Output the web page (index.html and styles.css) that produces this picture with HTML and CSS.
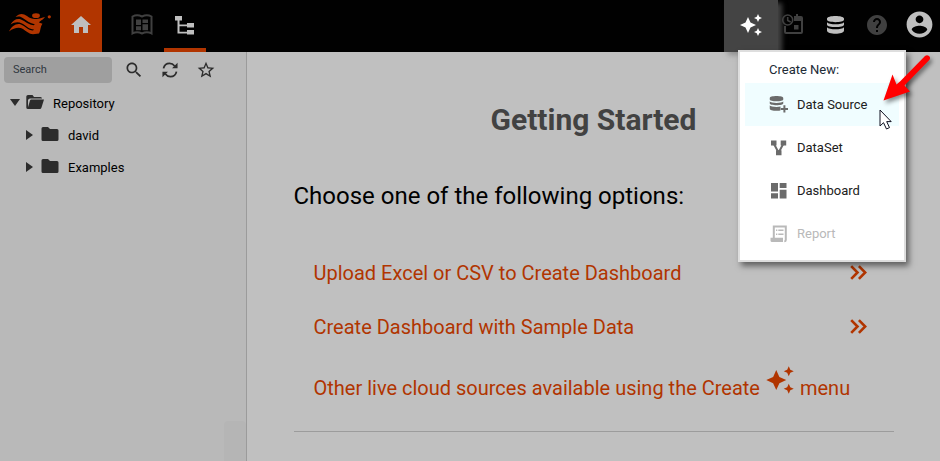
FILE: index.html
```html
<!DOCTYPE html>
<html lang="en">
<head>
<meta charset="utf-8">
<title>Getting Started</title>
<link rel="stylesheet" href="styles.css">
</head>
<body>
<svg class="defs" aria-hidden="true">
  <symbol id="sparkle" viewBox="0 0 24 24"><path d="M19 9l1.250-2.750L23 5l-2.750-1.250L19 1l-1.250 2.750L15 5l2.750 1.250zM11.500 9.500L9 4 6.500 9.500 1 12l5.500 2.500L9 20l2.500-5.500L17 12zM19 15l-1.250 2.750L15 19l2.750 1.250L19 23l1.250-2.750L23 19l-2.750-1.250z"/></symbol>
  <symbol id="folder" viewBox="0 0 18 14"><path d="M2 0h5l2 2h7q1.500 0 1.500 1.500v9q0 1.500-1.500 1.500H2Q.500 14 .500 12.500v-11Q.500 0 2 0z"/></symbol>
  <symbol id="chevrons" viewBox="0 0 17 15"><path d="M1.200 1.200L7.500 7.500l-6.300 6.300M8.900 1.200L15.200 7.500l-6.300 6.300" fill="none" stroke="currentColor" stroke-width="2.600"/></symbol>
  <symbol id="database" viewBox="0 0 17 18"><path d="M0 2.600C0-.8 17-.8 17 2.600v1.200c0 3.200-17 3.200-17 0zM0 6.300c2 2.700 15 2.700 17 0v2.400c0 3.200-17 3.200-17 0zM0 11.200c2 2.700 15 2.700 17 0v3.400c0 4.300-17 4.300-17 0z"/></symbol>
</svg>
<header class="topbar">
  <svg class="logo" viewBox="0 0 42 22"><circle cx="40.300" cy="3.800" r="1.600"/><ellipse cx="27" cy="2.700" rx="3.900" ry="2.400"/><path d="M6.500 4C10 .3 14 0 18 3c4 3 7 3.500 11 2.700 2.500-.3 4-1 7-1.700-2 3-5.500 4-6 5.500l3.500 1.200C31 14 32 17 30 20.500l-6 .8c-4-.3-7-3.300-10-5.300-4-2.300-9-1.200-14 2.500C3 13 7 10 12 11.500c4 1.500 7 6 12 6l1-.9c-5 0-8-4-12-6-4-2-7-1.500-11.500.9C4 7 8 5 12 6.500c4 1.500 8 5.700 13 5.700l.700-1C21 10.500 18 8 14.500 5.500 12 3.300 9 3 6.500 4z"/></svg>
  <a class="nav home"><svg width="24" height="24" viewBox="0 0 24 24"><path d="M10 20v-6h4v6h5v-8h3L12 3 2 12h3v8z"/></svg></a>
  <a class="nav book"><svg width="22" height="22" viewBox="0 0 22 22"><path class="line" d="M1.500 2.500Q6 0 11 2.500q5-2.500 9.500 0v17Q16 17 11 19.500 6 17 1.500 19.500z"/><path d="M5 5.500h5v5.500H5zM11.500 5.500H17v3.500h-5.500zM5 12.300h5v4H5zM11.500 10.300H17v6h-5.500z"/></svg></a>
  <a class="nav tree-tab"><svg width="20" height="19" viewBox="0 0 20 19"><path d="M0 0h7v4.500H4.500V8.500H12V7h7v4.500h-7v-1.300H4.500v5.600H12V14h7v4.500h-7v-1H2.500v-13H0z"/></svg></a>
  <span class="spacer"></span>
  <a class="create"><svg width="24" height="24"><use href="#sparkle"/></svg></a>
  <a class="tool dim"><svg width="21" height="21" viewBox="0 0 21 21"><circle cx="5.700" cy="6" r="5" class="line thin"/><path class="line thin" d="M5.700 3v3.500l3 1.500"/><path d="M12 2h2V0h2v2h3q2 0 2 2v14q0 2-2 2H4q-2 0-2-2v-6h2v6h15V7h-7zM12 11h4.500v4.500H12z"/></svg></a>
  <a class="tool"><svg width="17" height="18"><use href="#database"/></svg></a>
  <a class="tool dim"><svg width="24" height="24" viewBox="0 0 24 24"><path d="M12 2C6.480 2 2 6.480 2 12s4.480 10 10 10 10-4.480 10-10S17.520 2 12 2zm1 17h-2v-2h2v2zm2.070-7.750-.9.920C13.450 12.900 13 13.500 13 15h-2v-.5c0-1.100.450-2.100 1.170-2.830l1.240-1.260c.370-.360.590-.860.590-1.410 0-1.100-.9-2-2-2s-2 .9-2 2H8c0-2.210 1.790-4 4-4s4 1.790 4 4c0 .880-.360 1.680-.930 2.250z"/></svg></a>
  <a class="tool"><svg width="31" height="31" viewBox="0 0 24 24"><path d="M12 2C6.480 2 2 6.480 2 12s4.480 10 10 10 10-4.480 10-10S17.520 2 12 2zm0 3c1.660 0 3 1.340 3 3s-1.340 3-3 3-3-1.340-3-3 1.340-3 3-3zm0 14.200c-2.500 0-4.710-1.280-6-3.220.030-1.990 4-3.080 6-3.080 1.990 0 5.970 1.090 6 3.080-1.290 1.940-3.500 3.220-6 3.220z"/></svg></a>
</header>
<div class="body">
  <aside class="sidebar">
    <div class="searchbar">
      <div class="search">Search</div>
      <svg width="20" height="20" viewBox="0 0 24 24"><path d="M15.500 14h-.790l-.280-.270C15.410 12.590 16 11.110 16 9.500 16 5.910 13.090 3 9.500 3S3 5.910 3 9.500 5.910 16 9.500 16c1.610 0 3.090-.590 4.230-1.570l.270.280v.790l5 4.990L20.490 19l-4.990-5zm-6 0C7.010 14 5 11.990 5 9.500S7.010 5 9.500 5 14 7.010 14 9.500 11.990 14 9.500 14z"/></svg>
      <svg width="16" height="16" viewBox="0 0 18 18"><path class="line" d="M1.700 7.200C2.500 3.500 5.300 1.500 8.500 1.500c2.400 0 4.200 1 5.700 3M16.300 10.800c-.8 3.700-3.600 5.700-6.800 5.700-2.400 0-4.200-1-5.700-3"/><path d="M17.500 .800v6.200h-6.200zM.500 17.200V11h6.200z"/></svg>
      <svg width="20" height="20" viewBox="0 0 24 24"><path d="M22 9.240l-7.190-.620L12 2 9.190 8.630 2 9.240l5.460 4.730L5.820 21 12 17.270 18.180 21l-1.630-7.030L22 9.240zM12 15.400l-3.760 2.270 1-4.280-3.320-2.880 4.380-.380L12 6.100l1.710 4.040 4.380.380-3.320 2.880 1 4.280L12 15.400z"/></svg>
    </div>
    <div class="row root"><i class="caret open"></i><svg width="18" height="14" viewBox="0 0 18 14"><path d="M2 0h4.500L8 2h6.500q1.500 0 1.500 1.500H4Q2.500 3.500 2 5v7.200L4 5.500Q4.300 4.500 5.300 4.500H18l-2.500 8q-.4 1.500-1.700 1.500H2Q.300 14 .300 12.500v-11Q.300 0 2 0z"/></svg><span>Repository</span></div>
    <div class="row child"><i class="caret"></i><svg width="18" height="14"><use href="#folder"/></svg><span>david</span></div>
    <div class="row child"><i class="caret"></i><svg width="18" height="14"><use href="#folder"/></svg><span>Examples</span></div>
    <div class="handle"></div>
  </aside>
  <main class="main">
    <h1>Getting Started</h1>
    <p class="lead">Choose one of the following options:</p>
    <a class="option first"><span>Upload Excel or CSV to Create Dashboard</span><svg width="17" height="15"><use href="#chevrons"/></svg></a>
    <a class="option"><span>Create Dashboard with Sample Data</span><svg width="17" height="15"><use href="#chevrons"/></svg></a>
    <div class="option last"><span>Other live cloud sources available using the Create</span><svg width="30" height="30"><use href="#sparkle"/></svg><span>menu</span></div>
  </main>
</div>
<div class="menu">
  <div class="menu-title">Create New:</div>
  <div class="item active"><svg width="19" height="17" viewBox="0 0 19 17"><svg x=".5" width="14" height="15" viewBox="0 0 17 18" preserveAspectRatio="none"><use href="#database"/></svg><path class="knock" d="M11.500 9H19v8h-7.500z"/><path d="M14.400 9.300h2v2.600H19v2h-2.600v2.600h-2v-2.600h-2.600v-2h2.600z"/></svg><span>Data Source</span></div>
  <div class="item"><svg width="19" height="18" viewBox="0 0 19 18"><path d="M2 1.500h5.500v5H2zM11.700 1.500h5.500v5h-5.500zM7 11.200h5.500v5H7z"/><path class="line" d="M5 5l4 7.500M14.200 5l-4 7.500"/></svg><span>DataSet</span></div>
  <div class="item"><svg width="19" height="18" viewBox="0 0 19 18"><path d="M2 1h7v8.500H2zM10.700 1H17.500v5h-6.800zM2 11.300h7V16.500H2zM10.700 7.800H17.500v8.700h-6.800z"/></svg><span>Dashboard</span></div>
  <div class="item disabled"><svg width="19" height="18" viewBox="0 0 19 18"><path class="line" d="M4.800 13V1.500h12V15q0 1.200-1.500 1.200"/><path d="M1.500 12.700H14V17H3Q1.500 17 1.500 15.500zM7 4.500h1.300V6H7zM9.300 4.500H14.500V6H9.300zM7 8.500h1.300V10H7zM9.300 8.500H14.500V10H9.300z"/></svg><span>Report</span></div>
</div>
<svg class="arrow" width="60" height="56" viewBox="0 0 60 56"><path d="M48 4Q50 2.300 52 4t.300 4L27.500 33.500 33 39.500 6.500 48.500 15.500 22.500 19.500 32.500 23.500 29z"/></svg>
<svg class="cursor" width="14" height="22" viewBox="0 0 14 22"><path d="M1 1v16l3.500-3.300L7.500 20l3-1.400-2.800-6h4.500z"/></svg>
</body>
</html>
```
FILE: styles.css
```css
* { box-sizing: border-box; }
body { margin: 0; height: 461px; overflow: hidden; position: relative; font-family: Roboto, sans-serif; background: #c0c0c0; color: #000; }
svg { display: block; flex: none; fill: currentColor; }
.defs { position: absolute; width: 0; height: 0; }
.line { fill: none; stroke: currentColor; stroke-width: 2; }
.line.thin { stroke-width: 1.600; }

.topbar { display: flex; height: 52px; background: #010101; color: #bfbfbf; }
.logo { width: 42px; height: 22px; margin: 13px 9px 0; color: #b13500; overflow: visible; }
.nav { width: 42px; display: flex; justify-content: center; align-items: center; }
.home { background: #b13500; padding-bottom: 2px; }
.book { margin-left: 19px; color: #404040; padding-bottom: 3px; }
.tree-tab { margin-left: 1px; border-bottom: 4px solid #b13500; padding-top: 2px; }
.spacer { flex: 1; }
.create { width: 54px; background: #444; color: #fff; padding: 13px 0 0 15px; box-shadow: 4px 3px 5px rgba(110, 110, 110, .6); }
.tool { width: 42px; display: flex; justify-content: center; align-items: center; padding-bottom: 3px; }
.dim { color: #404040; }
.topbar .create + .tool { width: 36px; padding-right: 7px; }

.body { display: flex; height: 409px; }
.sidebar { width: 247px; background: #b9b9b9; border-right: 1px solid #9b9b9b; display: flex; flex-direction: column; color: #2c2c2c; }
.searchbar { display: flex; align-items: center; height: 35px; padding-left: 4px; }
.search { width: 108px; height: 26px; margin-right: 12px; border-radius: 4px; background: #9f9f9f; color: #303740; font-size: 11px; line-height: 25px; padding-left: 9px; }
.searchbar svg + svg { margin-left: 18px; }
.row { display: flex; align-items: center; height: 32px; font-size: 13px; }
.row span { color: #000; margin-left: 9px; }
.root { padding-left: 10px; }
.root svg { margin: -2px 0 0 6px; }
.child { padding-left: 26px; }
.child svg { margin: -2px 0 0 8px; }
.caret { border-left: 7px solid #2c2c2c; border-top: 5px solid transparent; border-bottom: 5px solid transparent; margin-top: -1px; }
.caret.open { border-top: 7px solid #2c2c2c; border-left: 5px solid transparent; border-right: 5px solid transparent; border-bottom: 0; margin-top: -2px; }
.handle { width: 22px; height: 40px; margin-top: auto; align-self: flex-end; background: #b5b5b5; border-radius: 4px 4px 0 0; }

.main { width: 600px; height: 380px; margin-left: 47px; border-bottom: 1px solid #9c9c9c; }
h1 { margin: 50px 1px 0 0; font-size: 30px; line-height: 36px; font-weight: 700; color: #424242; text-align: center; }
.lead { margin: 43px 0 0 -.5px; font-size: 24px; line-height: 30px; }
.option { display: flex; align-items: center; height: 54px; padding: 0 27px 0 19.500px; font-size: 20px; color: #b13500; justify-content: space-between; white-space: nowrap; }
.option.first { margin-top: 35px; }
.option > svg { margin-top: -1px; }
.option.last { height: 68px; justify-content: flex-start; }
.last > svg { margin: -16px 5px 0; }

.menu { position: absolute; left: 738px; top: 50px; width: 168px; height: 212px; background: #fff; border: 2px solid #dedede; box-shadow: 3px 4px 6px rgba(0, 0, 0, .5); font-size: 13px; color: #212b36; padding: 0 5px; }
.menu-title { height: 31px; padding: 10px 0 0 24px; line-height: 16px; }
.item { display: flex; align-items: center; height: 43px; padding-left: 24px; color: #6b6b6b; }
.item span { color: #202020; margin-left: 9px; }
.active { background: #f0fdff; }
.knock { fill: #f0fdff; }
.item.disabled, .disabled span { color: #b9b9b9; }
.arrow { position: absolute; left: 877px; top: 52px; fill: #f00; filter: drop-shadow(2px 3px 2px rgba(0, 0, 0, .45)); }
.cursor { position: absolute; left: 879px; top: 109px; fill: #fff; stroke: #101020; stroke-width: 1; }
```
